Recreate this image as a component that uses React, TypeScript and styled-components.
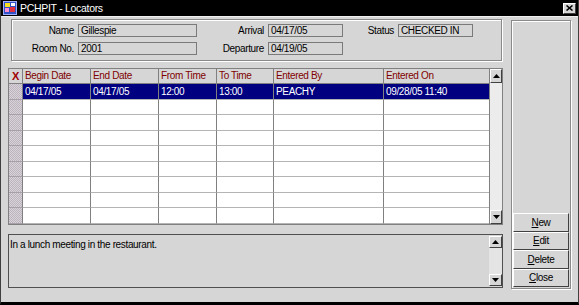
import React from "react";
import styled, { createGlobalStyle } from "styled-components";

const FONT = `"Liberation Sans", Arial, sans-serif`;

const Global = createGlobalStyle`
  html, body { margin: 0; padding: 0; background: #d6d6d6; }
  body { font-family: ${FONT}; font-size: 10px; }
  * { box-sizing: border-box; }
`;

const Window = styled.div`
  width: 579px;
  height: 305px;
  background: #d6d6d6;
  border-left: 1px solid #404040;
  border-right: 1px solid #404040;
  border-bottom: 3px solid #000;
  display: flex;
  flex-direction: column;
  font-family: ${FONT};
  font-size: 10px;
  letter-spacing: -0.35px;
  color: #000;
  overflow: hidden;
`;

const TitleBar = styled.div`
  height: 17px;
  flex: none;
  background: #000;
  color: #fff;
  display: flex;
  align-items: center;
  padding: 0 2px 0 2px;
  border-bottom: 1px solid #efefef;
`;

const TitleText = styled.span`
  margin-left: 3px;
  font-size: 10.5px;
  letter-spacing: -0.3px;
`;

const CloseBtn = styled.div`
  margin-left: auto;
  width: 13px;
  height: 11px;
  background: #d6d6d6;
  border-top: 1px solid #fff;
  border-left: 1px solid #fff;
  border-right: 1px solid #404040;
  border-bottom: 1px solid #404040;
  display: flex;
  align-items: center;
  justify-content: center;
`;

const Body = styled.div`
  flex: 1;
  display: flex;
  gap: 8px;
  padding: 2px 7px 13px 7px;
  min-height: 0;
`;

const LeftCol = styled.div`
  width: 495px;
  display: flex;
  flex-direction: column;
`;

const InfoBox = styled.div`
  height: 42px;
  margin: 0 1px 0 3px;
  border: 1px solid #8a8a8a;
  box-shadow: inset 1px 1px 0 #fff, 1px 1px 0 #fff;
  padding-top: 4px;
  display: grid;
  grid-template-columns: 66px 119px 71px 75px 55px 75px;
  grid-template-rows: 13px 13px;
  row-gap: 5px;
  align-content: start;
`;

const Label = styled.div`
  text-align: right;
  padding-right: 4px;
  line-height: 13px;
  white-space: nowrap;
`;

const Field = styled.div`
  border: 1px solid #7a7a7a;
  background: #d6d6d6;
  line-height: 11px;
  padding-left: 2px;
  white-space: nowrap;
  overflow: hidden;
`;

const Grid = styled.div`
  margin-top: 7px;
  height: 157px;
  border: 1px solid #808080;
  display: flex;
  background: #fff;
`;

const Table = styled.div`
  flex: 1;
  display: grid;
  grid-template-columns: 14px 68px 68px 58px 57px 110px 1fr;
  grid-template-rows: 15px repeat(9, 1fr);
`;

const HeadCell = styled.div<{ $center?: boolean }>`
  background: #d6d6d6;
  border-right: 1px solid #808080;
  border-bottom: 1px solid #808080;
  line-height: 14px;
  padding-left: ${(p) => (p.$center ? "0" : "2px")};
  text-align: ${(p) => (p.$center ? "center" : "left")};
  font-weight: ${(p) => (p.$center ? "bold" : "normal")};
  font-size: ${(p) => (p.$center ? "11px" : "10px")};
  color: ${(p) => (p.$center ? "#a00000" : "#800000")};
  white-space: nowrap;
  overflow: hidden;
  &:nth-child(7) { border-right: none; }
`;

const Indicator = styled.div`
  background-color: #cbc3cb;
  background-image: repeating-conic-gradient(#bdb5bd 0 25%, #dad2da 0 50%);
  background-size: 2px 2px;
  border-right: 1px solid #808080;
  border-bottom: 1px solid #a8a0a8;
`;

const Cell = styled.div<{ $sel?: boolean; $last?: boolean }>`
  background: ${(p) => (p.$sel ? "#000080" : "#fff")};
  color: ${(p) => (p.$sel ? "#fff" : "#000")};
  border-right: ${(p) => (p.$last ? "none" : "1px solid #808080")};
  border-bottom: 1px solid #b4b4b4;
  padding-left: 2px;
  display: flex;
  align-items: center;
  white-space: nowrap;
  overflow: hidden;
`;

const ScrollBar = styled.div`
  width: 13px;
  flex: none;
  border-left: 1px solid #808080;
  background: #ececec;
  display: flex;
  flex-direction: column;
  justify-content: space-between;
`;

const ArrowBtn = styled.div<{ $h?: number }>`
  height: ${(p) => p.$h ?? 14}px;
  background: #d6d6d6;
  border-top: 1px solid #fff;
  border-left: 1px solid #fff;
  border-right: 1px solid #404040;
  border-bottom: 1px solid #404040;
  display: flex;
  align-items: center;
  justify-content: center;
`;

const Notes = styled.div`
  margin-top: 9px;
  height: 54px;
  border: 1px solid #505050;
  display: flex;
  background: #d6d6d6;
`;

const NotesText = styled.div`
  flex: 1;
  padding: 3px 1px 0 1px;
  line-height: 13px;
`;

const NotesScroll = styled.div`
  width: 13px;
  flex: none;
  margin: 1px 0 1px 0;
  background: #e4e4e4;
  display: flex;
  flex-direction: column;
  justify-content: space-between;
`;

const RightPanel = styled.div`
  width: 60px;
  margin-top: 1px;
  border: 1px solid #8a8a8a;
  box-shadow: inset 1px 1px 0 #fff, 1px 1px 0 #fff;
  display: flex;
  flex-direction: column;
  justify-content: flex-end;
  padding: 0 1px 1px 1px;
`;

const Button = styled.div`
  height: 18.5px;
  background: #d6d6d6;
  border-top: 1px solid #fff;
  border-left: 1px solid #fff;
  border-right: 1px solid #404040;
  border-bottom: 1px solid #404040;
  display: flex;
  align-items: center;
  justify-content: center;
  & u { text-decoration: underline; }
`;

const Up = () => (
  <svg width="7" height="4" viewBox="0 0 7 4">
    <polygon points="3.5,0 7,4 0,4" fill="#000" />
  </svg>
);
const Down = () => (
  <svg width="7" height="4" viewBox="0 0 7 4">
    <polygon points="0,0 7,0 3.5,4" fill="#000" />
  </svg>
);

const AppIcon = () => (
  <svg width="14" height="14" viewBox="0 0 14 14">
    <rect x="0.5" y="0.5" width="13" height="13" fill="#3050c8" stroke="#a0b0ff" />
    <rect x="2" y="2" width="5" height="4" fill="#f8e020" />
    <rect x="7" y="6" width="5" height="5" fill="#e03040" />
    <rect x="2" y="7" width="4" height="4" fill="#ff90d0" />
    <path d="M8 2 L12 2 L12 5 L8 5 Z" fill="#ffffff" />
  </svg>
);

const columns = ["Begin Date", "End Date", "From Time", "To Time", "Entered By", "Entered On"];
const selRow = ["04/17/05", "04/17/05", "12:00", "13:00", "PEACHY", "09/28/05 11:40"];

export default function App() {
  const rows = Array.from({ length: 9 }, (_, i) => i);
  return (
    <>
      <Global />
      <Window>
        <TitleBar>
          <AppIcon />
          <TitleText>PCHPIT - Locators</TitleText>
          <CloseBtn>
            <svg width="7" height="6" viewBox="0 0 7 6">
              <path d="M0.5 0.5 L6.5 5.5 M6.5 0.5 L0.5 5.5" stroke="#000" strokeWidth="1.6" />
            </svg>
          </CloseBtn>
        </TitleBar>
        <Body>
          <LeftCol>
            <InfoBox>
              <Label>Name</Label>
              <Field>Gillespie</Field>
              <Label>Arrival</Label>
              <Field>04/17/05</Field>
              <Label>Status</Label>
              <Field>CHECKED IN</Field>
              <Label>Room No.</Label>
              <Field>2001</Field>
              <Label>Departure</Label>
              <Field>04/19/05</Field>
            </InfoBox>
            <Grid>
              <Table>
                <HeadCell $center>X</HeadCell>
                {columns.map((c) => (
                  <HeadCell key={c}>{c}</HeadCell>
                ))}
                {rows.map((r) => (
                  <React.Fragment key={r}>
                    <Indicator />
                    {columns.map((c, ci) => (
                      <Cell key={c} $sel={r === 0} $last={ci === columns.length - 1}>
                        {r === 0 ? selRow[ci] : ""}
                      </Cell>
                    ))}
                  </React.Fragment>
                ))}
              </Table>
              <ScrollBar>
                <ArrowBtn $h={14}><Up /></ArrowBtn>
                <ArrowBtn $h={14}><Down /></ArrowBtn>
              </ScrollBar>
            </Grid>
            <Notes>
              <NotesText>In a lunch meeting in the restaurant.</NotesText>
              <NotesScroll>
                <ArrowBtn $h={12}><Up /></ArrowBtn>
                <ArrowBtn $h={12}><Down /></ArrowBtn>
              </NotesScroll>
            </Notes>
          </LeftCol>
          <RightPanel>
            <Button><span><u>N</u>ew</span></Button>
            <Button><span><u>E</u>dit</span></Button>
            <Button><span><u>D</u>elete</span></Button>
            <Button><span><u>C</u>lose</span></Button>
          </RightPanel>
        </Body>
      </Window>
    </>
  );
}
